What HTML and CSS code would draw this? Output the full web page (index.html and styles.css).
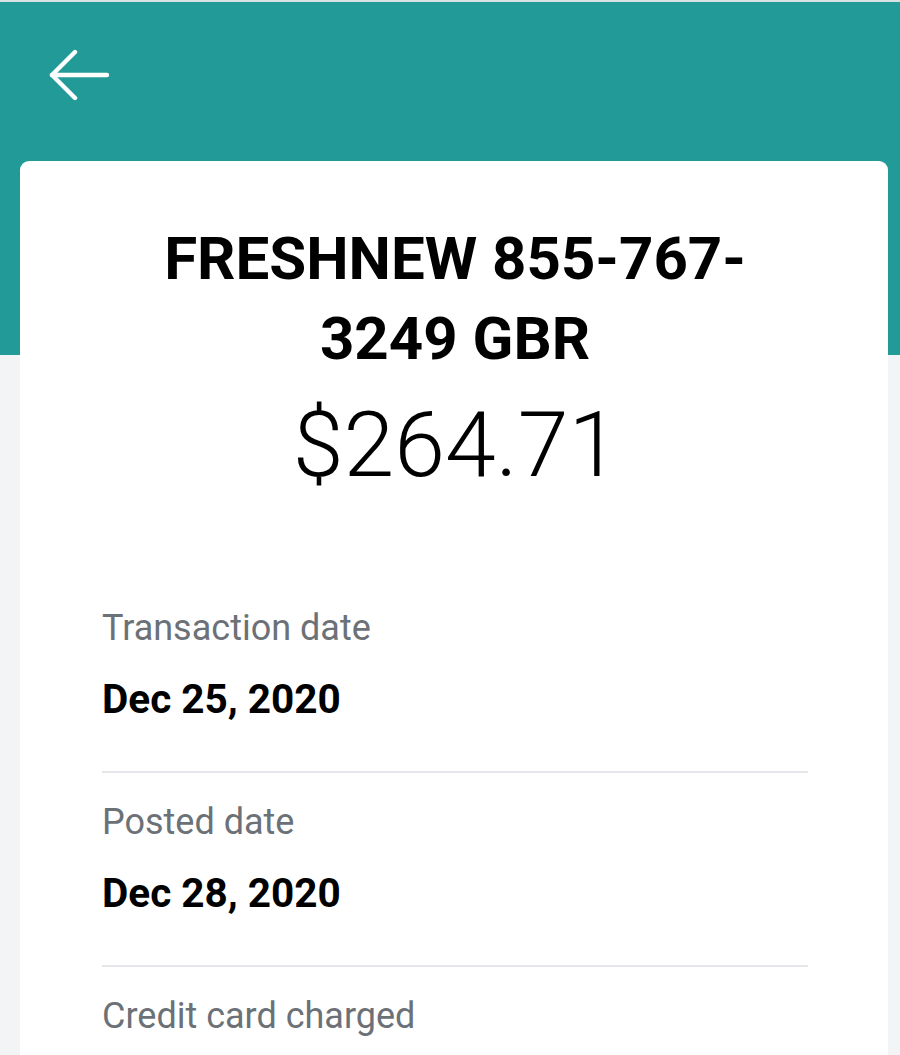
FILE: index.html
```html
<!DOCTYPE html>
<html>
<head>
<meta charset="utf-8">
<link rel="stylesheet" href="styles.css">
</head>
<body>
<header class="topbar">
  <button class="back" aria-label="Back">
    <svg width="62" height="52" viewBox="0 0 62 52" fill="none" stroke="#fff" stroke-width="4.4" stroke-linecap="round" stroke-linejoin="round">
      <path d="M3 26 H58"/>
      <path d="M26 3 L3 26 L26 49"/>
    </svg>
  </button>
</header>
<main class="card">
  <h1 class="merchant">FRESHNEW 855-767-3249 GBR</h1>
  <div class="amount">$264.71</div>
  <dl class="details">
    <div class="row">
      <dt class="label">Transaction date</dt>
      <dd class="value">Dec 25, 2020</dd>
    </div>
    <div class="row">
      <dt class="label">Posted date</dt>
      <dd class="value">Dec 28, 2020</dd>
    </div>
    <div class="row last">
      <dt class="label">Credit card charged</dt>
    </div>
  </dl>
</main>
</body>
</html>
```
FILE: styles.css
```css
html, body {
  margin: 0;
  padding: 0;
}
body {
  background: #f3f4f6;
  font-family: Roboto, "Noto Sans", Arial, sans-serif;
  color: #000;
  overflow: hidden;
}
.topbar {
  height: 355px;
  background: #229b98;
  border-top: 2px solid #d9e3e3;
  box-sizing: border-box;
  padding: 47px 0 0 49px;
}
.back {
  background: none;
  border: 0;
  padding: 0;
  display: block;
  cursor: pointer;
}
.back svg {
  display: block;
}
.card {
  margin: -194px 12px 0 20px;
  background: #fff;
  border-radius: 9px 9px 0 0;
  padding: 58px 80px 0 82px;
  min-height: 900px;
}
.merchant {
  margin: 0;
  font-size: 60px;
  line-height: 80px;
  font-weight: 700;
  text-align: center;
}
.amount {
  margin-top: 10px;
  font-size: 91.5px;
  line-height: 112px;
  font-weight: 300;
  text-align: center;
  padding-left: 2px;
}
.details {
  margin: 105px 0 0 0;
}
.row {
  border-bottom: 2px solid #e5e7eb;
  padding-bottom: 50px;
  margin-bottom: 27px;
}
.row.last {
  border-bottom: 0;
}
.label {
  font-size: 36px;
  line-height: 44px;
  color: #6b7177;
  margin: 0;
}
.value {
  margin: 27px 0 0 0;
  font-size: 40.5px;
  line-height: 44px;
  font-weight: 700;
}
```
